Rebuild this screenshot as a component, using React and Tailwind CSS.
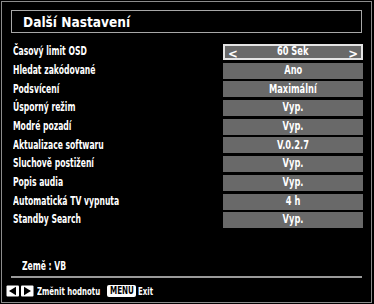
import React from 'react';

const rows = [
  { label: 'Časový limit OSD', value: '60 Sek', active: true },
  { label: 'Hledat zakódované', value: 'Ano' },
  { label: 'Podsvícení', value: 'Maximální' },
  { label: 'Úsporný režim', value: 'Vyp.' },
  { label: 'Modré pozadí', value: 'Vyp.' },
  { label: 'Aktualizace softwaru', value: 'V.0.2.7' },
  { label: 'Sluchově postižení', value: 'Vyp.' },
  { label: 'Popis audia', value: 'Vyp.' },
  { label: 'Automatická TV vypnuta', value: '4 h' },
  { label: 'Standby Search', value: 'Vyp.' },
];

// condensed TV-style text
const Narrow = ({ children, className = '' }) => (
  <span className={`inline-block origin-left scale-x-[0.74] whitespace-nowrap ${className}`}>{children}</span>
);

const Row = ({ label, value, active }) => (
  <div className="flex h-[16px] items-center">
    <div className="ml-[11px] text-[11.5px] font-bold leading-none text-white">
      <Narrow>{label}</Narrow>
    </div>
    <div
      className={`relative ml-auto mr-[8px] flex h-[16px] w-[140px] items-center justify-center bg-[#696969] ${
        active ? 'border-2 border-[#e4e4e4]' : ''
      }`}
    >
      {active && <span className="absolute left-[3px] top-[-2px] text-[13px] font-bold text-white">&lt;</span>}
      <span className="inline-block scale-x-[0.8] whitespace-nowrap text-[11.5px] font-bold leading-none text-white">{value}</span>
      {active && <span className="absolute right-[3px] top-[-2px] text-[13px] font-bold text-white">&gt;</span>}
    </div>
  </div>
);

const ArrowKeys = () => (
  <svg width="28" height="12" viewBox="0 0 28 12">
    <rect x="0.5" y="0.5" width="12.5" height="11" fill="#fff" rx="1" />
    <rect x="15" y="0.5" width="12.5" height="11" fill="#fff" rx="1" />
    <polygon points="3,6 10,1.8 10,10.2" fill="#000" />
    <polygon points="25,6 18,1.8 18,10.2" fill="#000" />
  </svg>
);

export default function App() {
  return (
    <div
      className="h-[304px] w-[374px] overflow-hidden bg-black pl-[1px] pt-[1px]"
      style={{ fontFamily: '"DejaVu Sans Condensed", "DejaVu Sans", sans-serif' }}
    >
      <div className="flex h-[302px] w-[371px] flex-col border border-[#8c8c8c]">
        {/* title */}
        <div className="ml-[9px] mt-[8px] flex h-[23px] w-[351px] items-center border border-[#a8a8a8] pl-[11px]">
          <span className="text-[14px] font-bold leading-none text-white">
            <span className="inline-block origin-left scale-x-[0.97] whitespace-nowrap">Další Nastavení</span>
          </span>
        </div>

        {/* settings */}
        <div className="mt-[11px] flex flex-col gap-[2.7px]">
          {rows.map((r) => (
            <Row key={r.label} {...r} />
          ))}
        </div>

        <div className="ml-[20px] mt-[31px] h-[14px] text-[11.5px] font-bold leading-[14px] text-white">
          <Narrow>Země : VB</Narrow>
        </div>
        <div className="ml-[9px] mt-[3px] h-[2px] w-[351px] bg-[#9a9a9a]" />

        {/* footer */}
        <div className="ml-[4px] mt-[7px] flex h-[12px] items-center">
          <ArrowKeys />
          <span className="ml-[3px] w-[70px] text-[10.5px] font-bold leading-none text-white">
            <Narrow>Změnit hodnotu</Narrow>
          </span>
          <span className="flex h-[12px] w-[29px] items-center justify-center rounded-[2px] bg-white">
            <span className="inline-block scale-x-[0.8] text-[10px] font-bold leading-none text-black">MENU</span>
          </span>
          <span className="ml-[2px] text-[10.5px] font-bold leading-none text-white">
            <Narrow>Exit</Narrow>
          </span>
        </div>
      </div>
    </div>
  );
}
